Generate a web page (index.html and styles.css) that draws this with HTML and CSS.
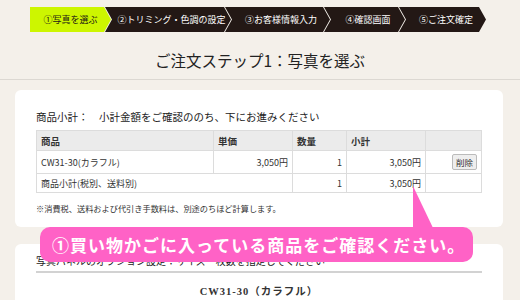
FILE: index.html
```html
<!DOCTYPE html>
<html lang="ja">
<head>
    <meta charset="UTF-8">
    <title>ご注文ステップ1</title>
    <link rel="stylesheet" href="styles.css">
</head>
<body>

    <!-- Order steps -->
    <div class="steps">
        <div class="step current s1">①写真を選ぶ</div>
        <div class="step s2">②トリミング・色調の設定</div>
        <div class="step s3">③お客様情報入力</div>
        <div class="step s4">④確認画面</div>
        <div class="step s5">⑤ご注文確定</div>
    </div>

    <h1 class="page-title">ご注文ステップ1：写真を選ぶ</h1>

    <!-- Cart subtotal -->
    <div class="card cart">
        <h2 class="cart-head">商品小計：　小計金額をご確認ののち、下にお進みください</h2>
        <table class="cart-table">
            <tr>
                <th class="c-name">商品</th>
                <th class="c-price">単価</th>
                <th class="c-qty">数量</th>
                <th class="c-sub">小計</th>
                <th class="c-act"></th>
            </tr>
            <tr class="item">
                <td>CW31-30(カラフル)</td>
                <td class="num">3,050円</td>
                <td class="num">1</td>
                <td class="num">3,050円</td>
                <td class="num"><button class="del">削除</button></td>
            </tr>
            <tr class="total">
                <td colspan="2">商品小計(税別、送料別)</td>
                <td class="num">1</td>
                <td class="num">3,050円</td>
                <td></td>
            </tr>
        </table>
        <p class="note">※消費税、送料および代引き手数料は、別途のちほど計算します。</p>
    </div>

    <!-- Panel options -->
    <div class="card options">
        <h2 class="opt-head">写真パネルのオプション設定：サイズ・枚数を指定してください</h2>
        <div class="opt-item">CW31-30（カラフル）</div>
    </div>

    <!-- Callout over the page -->
    <svg class="pointer" width="24" height="44" viewBox="0 0 24 44">
        <path d="M1 0 L1 44 L22 44 Z" fill="#ff62c6"/>
    </svg>
    <div class="callout">①買い物かごに入っている商品をご確認ください。</div>

</body>
</html>
```

FILE: styles.css
```css
body {
    margin: 0;
    background-color: #f4f0ea;
    font-family: "Noto Sans CJK JP", sans-serif;
    color: #222;
    position: relative;
    height: 300px;
    overflow: hidden;
}
.steps {
    display: flex;
    padding: 7px 0 0 30px;
}
.step {
    height: 25px;
    line-height: 25px;
    font-size: 9px;
    color: #fff;
    background-color: #231815;
    text-align: center;
    padding-left: 7px;
    margin-left: -6px;
    clip-path: polygon(0 0, calc(100% - 7px) 0, 100% 50%, calc(100% - 7px) 100%, 0 100%, 7px 50%);
    box-sizing: border-box;
}
.step.current {
    background-color: #cdf600;
    color: #231815;
    margin-left: 0;
    padding-left: 0;
    clip-path: polygon(0 0, calc(100% - 7px) 0, 100% 50%, calc(100% - 7px) 100%, 0 100%);
}
.s1 { width: 81px; }
.s2 { width: 126px; }
.s3 { width: 105px; }
.s4 { width: 81px; }
.s5 { width: 87px; }

.page-title {
    margin: 0;
    padding: 17px 0 8px;
    font-size: 15.5px;
    font-weight: normal;
    text-align: center;
    line-height: 22px;
    border-bottom: 1px solid #dcd8d2;
}
.card {
    background-color: #fff;
    margin: 10px 17px 0 15px;
    padding: 0 21px;
    border-radius: 6px;
}
.cart {
    padding-top: 18px;
    padding-bottom: 13px;
    margin-bottom: 17px;
}
.cart-head {
    margin: 0 0 5px;
    font-size: 10.5px;
    font-weight: normal;
    line-height: 17px;
}
.cart-table {
    width: 100%;
    border-collapse: collapse;
    font-size: 9px;
    color: #333;
}
.cart-table th, .cart-table td {
    border: 1px solid #dcdcdc;
    padding: 0 4px;
    text-align: left;
}
.cart-table th {
    background-color: #ebebeb;
    height: 19px;
    font-weight: bold;
    font-size: 9.5px;
}
.cart-table td.num {
    text-align: right;
}
.c-name { width: 168px; }
.c-price { width: 70px; }
.c-qty { width: 45px; }
.c-sub { width: 70px; }
.item td { height: 22px; }
.total td { height: 18px; }
.del {
    font-family: inherit;
    font-size: 8.5px;
    padding: 1px 3px;
    background-color: #eee;
    border: 1px solid #bbb;
    border-radius: 2px;
    color: #333;
}
.note {
    margin: 9px 0 0;
    font-size: 8.2px;
    color: #333;
}
.options {
    padding-top: 9px;
    height: 80px;
}
.opt-head {
    margin: 0;
    font-size: 10px;
    line-height: 16px;
    font-weight: normal;
    padding-bottom: 2px;
    border-bottom: 2px solid #d2d2d2;
}
.opt-item {
    margin-top: 10px;
    text-align: center;
    font-family: "Liberation Serif", "Noto Sans CJK JP", serif;
    font-weight: bold;
    font-size: 10.5px;
    letter-spacing: 1px;
    color: #333;
}
.pointer {
    position: absolute;
    left: 412px;
    top: 186px;
}
.callout {
    position: absolute;
    left: 40px;
    top: 227px;
    width: 421px;
    height: 35px;
    padding-left: 12px;
    background-color: #ff62c6;
    border-radius: 10px;
    color: #fff;
    font-weight: bold;
    font-size: 17px;
    line-height: 35px;
    letter-spacing: 1px;
    white-space: nowrap;
}
```
